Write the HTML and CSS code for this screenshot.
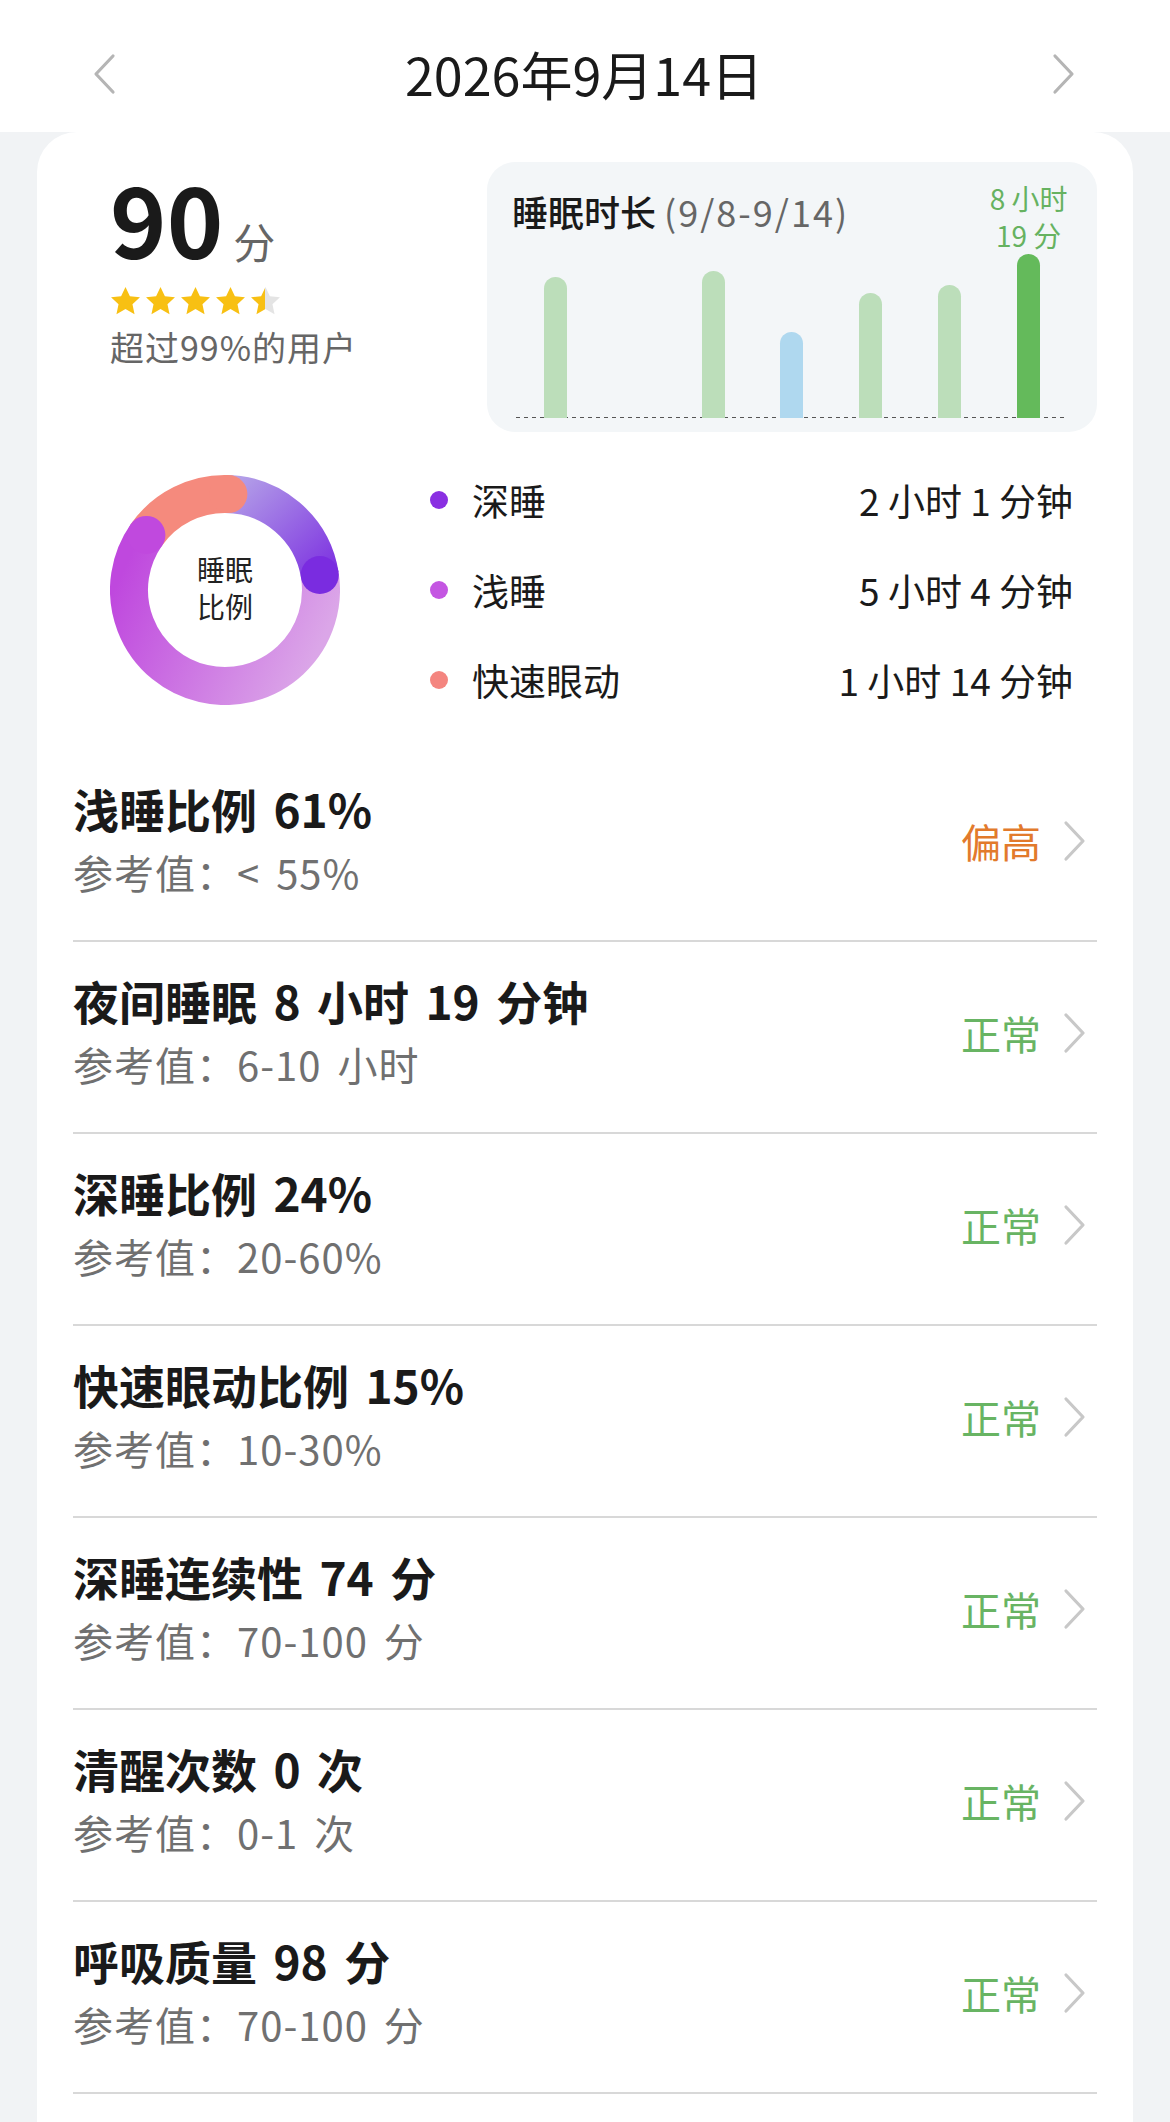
FILE: index.html
```html
<!DOCTYPE html>
<html lang="zh-CN">

<head>
    <meta charset="UTF-8">
    <meta name="viewport" content="width=device-width, initial-scale=1.0">
    <title>睡眠报告</title>
    <link rel="stylesheet" href="styles.css">
</head>

<body>
    <header class="topbar">
        <svg class="nav-arrow" viewBox="0 0 24 42" width="24" height="42"><path d="M21 3 L4 21 L21 39" /></svg>
        <h1 class="date">2026年9月14日</h1>
        <svg class="nav-arrow" viewBox="0 0 24 42" width="24" height="42"><path d="M3 3 L20 21 L3 39" /></svg>
    </header>

    <main class="card">
        <section class="summary">
            <div class="score">
                <div class="score-num">90<span class="unit">分</span></div>
                <div class="stars">
                    <svg viewBox="0 0 24 24" width="31" height="31"><path class="star-on" d="M12 .8l3.4 7.1 7.8.9-5.8 5.3 1.6 7.7L12 17.9l-7 3.9 1.6-7.7L.8 8.8l7.8-.9z" /></svg>
                    <svg viewBox="0 0 24 24" width="31" height="31"><path class="star-on" d="M12 .8l3.4 7.1 7.8.9-5.8 5.3 1.6 7.7L12 17.9l-7 3.9 1.6-7.7L.8 8.8l7.8-.9z" /></svg>
                    <svg viewBox="0 0 24 24" width="31" height="31"><path class="star-on" d="M12 .8l3.4 7.1 7.8.9-5.8 5.3 1.6 7.7L12 17.9l-7 3.9 1.6-7.7L.8 8.8l7.8-.9z" /></svg>
                    <svg viewBox="0 0 24 24" width="31" height="31"><path class="star-on" d="M12 .8l3.4 7.1 7.8.9-5.8 5.3 1.6 7.7L12 17.9l-7 3.9 1.6-7.7L.8 8.8l7.8-.9z" /></svg>
                    <svg viewBox="0 0 24 24" width="31" height="31">
                        <defs>
                            <linearGradient id="halfStar" x1="0" y1="0" x2="1" y2="0">
                                <stop offset="0.5" stop-color="#f8c013" />
                                <stop offset="0.5" stop-color="#e4e4e4" />
                            </linearGradient>
                        </defs>
                        <path fill="url(#halfStar)" d="M12 .8l3.4 7.1 7.8.9-5.8 5.3 1.6 7.7L12 17.9l-7 3.9 1.6-7.7L.8 8.8l7.8-.9z" />
                    </svg>
                </div>
                <p class="rank">超过99%的用户</p>
            </div>

            <div class="duration">
                <div class="duration-title">睡眠时长 <span>(9/8-9/14)</span></div>
                <div class="plot">
                    <div class="col"><div class="bar past" style="height:141px"></div></div>
                    <div class="col"></div>
                    <div class="col"><div class="bar past" style="height:147px"></div></div>
                    <div class="col"><div class="bar short" style="height:86px"></div></div>
                    <div class="col"><div class="bar past" style="height:125px"></div></div>
                    <div class="col"><div class="bar past" style="height:133px"></div></div>
                    <div class="col">
                        <div class="bar-label">8 小时<br>19 分</div>
                        <div class="bar today" style="height:164px"></div>
                    </div>
                </div>
            </div>
        </section>

        <section class="ratio">
            <svg class="donut" viewBox="0 0 230 230" width="230" height="230">
                <defs>
                    <linearGradient id="gDeep" gradientUnits="userSpaceOnUse" x1="115" y1="10" x2="215" y2="115">
                        <stop offset="0" stop-color="#b5a3e8" />
                        <stop offset="1" stop-color="#7a2ce0" />
                    </linearGradient>
                    <linearGradient id="gLight" gradientUnits="userSpaceOnUse" x1="215" y1="160" x2="25" y2="70">
                        <stop offset="0" stop-color="#dba6e8" />
                        <stop offset="1" stop-color="#bf48de" />
                    </linearGradient>
                </defs>
                <g fill="none" stroke-width="38">
                    <path d="M115 19 A96 96 0 0 1 209.8 100" stroke="url(#gDeep)" />
                    <path d="M209.8 100 A96 96 0 1 1 36.4 59.9" stroke="url(#gLight)" />
                    <path d="M36.4 59.9 A96 96 0 0 1 118.4 19.1" stroke="#f58a7d" />
                </g>
                <circle cx="118.4" cy="19.1" r="19" fill="#f58a7d" />
                <circle cx="36.4" cy="59.9" r="19" fill="#c049de" />
                <circle cx="209.8" cy="100" r="19" fill="#7a2ce0" />
                <text class="donut-text" x="115" y="106" text-anchor="middle">睡眠</text>
                <text class="donut-text" x="115" y="143" text-anchor="middle">比例</text>
            </svg>

            <ul class="legend">
                <li><span class="dot deep"></span>深睡<span class="value">2 小时 1 分钟</span></li>
                <li><span class="dot light"></span>浅睡<span class="value">5 小时 4 分钟</span></li>
                <li><span class="dot rem"></span>快速眼动<span class="value">1 小时 14 分钟</span></li>
            </ul>
        </section>

        <ul class="metrics">
            <li>
                <div class="metric-text">
                    <div class="metric-title">浅睡比例 61%</div>
                    <div class="metric-ref">参考值：&lt; 55%</div>
                </div>
                <span class="status high">偏高</span>
                <svg class="chevron" viewBox="0 0 24 42" width="24" height="42"><path d="M3 3 L20 21 L3 39" /></svg>
            </li>
            <li>
                <div class="metric-text">
                    <div class="metric-title">夜间睡眠 8 小时 19 分钟</div>
                    <div class="metric-ref">参考值：6-10 小时</div>
                </div>
                <span class="status ok">正常</span>
                <svg class="chevron" viewBox="0 0 24 42" width="24" height="42"><path d="M3 3 L20 21 L3 39" /></svg>
            </li>
            <li>
                <div class="metric-text">
                    <div class="metric-title">深睡比例 24%</div>
                    <div class="metric-ref">参考值：20-60%</div>
                </div>
                <span class="status ok">正常</span>
                <svg class="chevron" viewBox="0 0 24 42" width="24" height="42"><path d="M3 3 L20 21 L3 39" /></svg>
            </li>
            <li>
                <div class="metric-text">
                    <div class="metric-title">快速眼动比例 15%</div>
                    <div class="metric-ref">参考值：10-30%</div>
                </div>
                <span class="status ok">正常</span>
                <svg class="chevron" viewBox="0 0 24 42" width="24" height="42"><path d="M3 3 L20 21 L3 39" /></svg>
            </li>
            <li>
                <div class="metric-text">
                    <div class="metric-title">深睡连续性 74 分</div>
                    <div class="metric-ref">参考值：70-100 分</div>
                </div>
                <span class="status ok">正常</span>
                <svg class="chevron" viewBox="0 0 24 42" width="24" height="42"><path d="M3 3 L20 21 L3 39" /></svg>
            </li>
            <li>
                <div class="metric-text">
                    <div class="metric-title">清醒次数 0 次</div>
                    <div class="metric-ref">参考值：0-1 次</div>
                </div>
                <span class="status ok">正常</span>
                <svg class="chevron" viewBox="0 0 24 42" width="24" height="42"><path d="M3 3 L20 21 L3 39" /></svg>
            </li>
            <li>
                <div class="metric-text">
                    <div class="metric-title">呼吸质量 98 分</div>
                    <div class="metric-ref">参考值：70-100 分</div>
                </div>
                <span class="status ok">正常</span>
                <svg class="chevron" viewBox="0 0 24 42" width="24" height="42"><path d="M3 3 L20 21 L3 39" /></svg>
            </li>
        </ul>
    </main>
</body>

</html>
```

FILE: styles.css
```css
body {
    margin: 0;
    padding: 0;
    background-color: #f1f3f5;
    color: #1a1a1a;
    font-family: "Noto Sans CJK SC", "Noto Sans", sans-serif;
}

/* Date bar */
.topbar {
    height: 132px;
    box-sizing: border-box;
    padding: 16px 94px 0 92px;
    background: #fff;
    display: flex;
    align-items: center;
    justify-content: space-between;
}

.nav-arrow path,
.chevron path {
    fill: none;
    stroke-width: 3.2;
    stroke-linecap: round;
    stroke-linejoin: round;
}

.nav-arrow path {
    stroke: #b5b5b5;
}

.date {
    margin: 0;
    font-size: 52px;
    font-weight: 400;
    line-height: 1;
}

/* Main white card */
.card {
    margin: 0 37px;
    min-height: 1990px;
    box-sizing: border-box;
    padding: 30px 36px 20px;
    background: #fff;
    border-radius: 40px 40px 0 0;
}

.summary {
    display: flex;
    justify-content: space-between;
    height: 270px;
}

.score {
    padding: 6px 0 0 37px;
}

.score-num {
    height: 100px;
    font-size: 96px;
    font-weight: 700;
    line-height: 100px;
    white-space: nowrap;
}

.unit {
    margin-left: 10px;
    font-size: 42px;
    font-weight: 400;
    line-height: 1;
    color: #666;
}

.stars {
    display: flex;
    gap: 4px;
    margin-top: 18px;
}

.stars svg {
    display: block;
}

.star-on {
    fill: #f8c013;
}

.rank {
    margin: 10px 0 0;
    font-size: 34px;
    line-height: 40px;
    letter-spacing: 1px;
    color: #666;
}

/* Sleep duration chart */
.duration {
    width: 610px;
    height: 270px;
    display: grid;
    background: #f3f6f8;
    border-radius: 28px;
    overflow: hidden;
}

.duration-title,
.plot {
    grid-area: 1 / 1;
}

.duration-title {
    position: relative;
    z-index: 1;
    padding: 27px 0 0 25px;
    font-size: 36px;
    font-weight: 500;
    line-height: 44px;
}

.duration-title span {
    font-weight: 400;
    color: #666;
    letter-spacing: 2px;
}

.plot {
    display: grid;
    grid-template-columns: repeat(7, 1fr);
    padding: 0 29px 14px;
    background-image: repeating-linear-gradient(to right, #555 0 4px, transparent 4px 8px);
    background-origin: content-box;
    background-clip: content-box;
    background-position: left bottom;
    background-size: 100% 1px;
    background-repeat: no-repeat;
}

.col {
    display: flex;
    flex-direction: column;
    justify-content: flex-end;
    align-items: center;
}

.bar {
    width: 23px;
    border-radius: 12px 12px 0 0;
}

.bar.past {
    background: #bcdeba;
}

.bar.short {
    background: #afd8ef;
}

.bar.today {
    background: #64ba5b;
}

.bar-label {
    font-size: 28px;
    line-height: 37px;
    color: #66b260;
    text-align: center;
    white-space: nowrap;
}

/* Stage ratio */
.ratio {
    display: flex;
    align-items: center;
    padding: 43px 0 45px 37px;
}

.donut {
    flex-shrink: 0;
}

.donut-text {
    font-size: 28px;
    fill: #222;
}

.legend {
    flex: 1;
    list-style: none;
    margin: -20px 0 -20px 90px;
    padding: 0 24px 0 0;
}

.legend li {
    display: flex;
    align-items: center;
    height: 90px;
    font-size: 37px;
}

.dot {
    width: 18px;
    height: 18px;
    border-radius: 50%;
    margin-right: 24px;
}

.dot.deep {
    background: #8a2fe2;
}

.dot.light {
    background: #c456e2;
}

.dot.rem {
    background: #f4857f;
}

.value {
    margin-left: auto;
}

/* Metric rows */
.metrics {
    list-style: none;
    margin: 0;
    padding: 0;
}

.metrics li {
    display: flex;
    align-items: center;
    height: 192px;
    box-sizing: border-box;
    border-bottom: 2px solid #d8d8d8;
}

.metric-text {
    flex: 1;
    margin-top: -6px;
}

.metric-title {
    font-size: 46px;
    font-weight: 700;
    line-height: 60px;
    word-spacing: 6px;
}

.metric-ref {
    font-size: 40px;
    line-height: 68px;
    letter-spacing: 1px;
    word-spacing: 6px;
    color: #707070;
}

.status {
    margin-bottom: 8px;
    font-size: 40px;
}

.status.high {
    color: #e27a2c;
}

.status.ok {
    color: #68b463;
}

.chevron {
    margin: 0 10px 8px 22px;
}

.chevron path {
    stroke: #c8c8c8;
}
```
